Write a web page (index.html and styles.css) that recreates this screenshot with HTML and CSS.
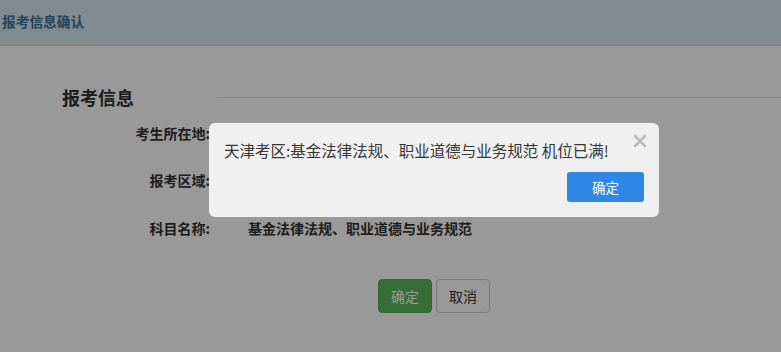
FILE: index.html
```html
<!DOCTYPE html>
<html lang="zh-CN">
<head>
<meta charset="utf-8">
<title>报考信息确认</title>
<link rel="stylesheet" href="styles.css">
</head>
<body>
<header class="topbar"><span class="topbar-title">报考信息确认</span></header>
<main class="content">
  <div class="section-head">
    <h2 class="section-title">报考信息</h2>
    <div class="section-rule"></div>
  </div>
  <div class="rows">
    <div class="row"><span class="row-label">考生所在地:</span><span class="row-value"></span></div>
    <div class="row"><span class="row-label">报考区域:</span><span class="row-value"></span></div>
    <div class="row"><span class="row-label">科目名称:</span><span class="row-value">基金法律法规、职业道德与业务规范</span></div>
  </div>
  <div class="actions">
    <button class="btn btn-success">确定</button>
    <button class="btn btn-default">取消</button>
  </div>
</main>
<div class="overlay"></div>
<div class="dialog">
  <svg class="dialog-close" width="12" height="12" viewBox="0 0 12 12"><path d="M1 1L11 11M11 1L1 11" stroke="#bababa" stroke-width="2.6" stroke-linecap="round"/></svg>
  <div class="dialog-msg">天津考区:基金法律法规、职业道德与业务规范 机位已满!</div>
  <div class="dialog-foot"><button class="btn-primary">确定</button></div>
</div>
</body>
</html>
```
FILE: styles.css
```css
html, body {
  margin: 0;
  padding: 0;
  height: 100%;
}
body {
  background: #ffffff;
  font-family: "Noto Sans CJK SC", "Liberation Sans", sans-serif;
  color: #333333;
  position: relative;
  overflow: hidden;
}
.topbar {
  height: 45px;
  border-bottom: 1px solid #c4d8e6;
  background: #d4e6f2;
  display: flex;
  align-items: center;
  padding-left: 2px;
}
.topbar-title {
  font-size: 13.7px;
  font-weight: bold;
  color: #3a729a;
  line-height: 20px;
  margin-top: -4px;
}
.content {
  padding-left: 62px;
}
.section-head {
  display: flex;
  align-items: center;
  margin-top: 39px;
  height: 24px;
}
.section-title {
  margin: 0;
  font-size: 18px;
  font-weight: bold;
  line-height: 24px;
  color: #333333;
}
.section-rule {
  flex: 1;
  height: 1px;
  background: #e3e3e3;
  margin-left: 83px;
}
.rows {
  display: flex;
  flex-direction: column;
}
.row {
  display: flex;
  height: 47.5px;
  align-items: center;
  font-size: 14px;
  font-weight: bold;
  color: #333333;
}
.row-label {
  width: 148px;
  text-align: right;
}
.row-value {
  margin-left: 38px;
}
.actions {
  margin-top: 27.5px;
  padding-left: 316px;
  display: flex;
  gap: 4px;
}
.btn {
  width: 54px;
  height: 34px;
  border-radius: 4px;
  font-family: inherit;
  font-size: 14px;
  padding: 0;
  cursor: pointer;
}
.btn-success {
  background: #5cb85c;
  border: 1px solid #4cae4c;
  color: #ffffff;
}
.btn-default {
  background: #ffffff;
  border: 1px solid #cccccc;
  color: #333333;
}
.overlay {
  position: absolute;
  inset: 0;
  background: rgba(0, 0, 0, 0.4);
}
.dialog {
  position: absolute;
  left: 209px;
  top: 123px;
  width: 450px;
  height: 94px;
  box-sizing: border-box;
  background: #f0f0f0;
  border-radius: 6px;
  padding: 16px 15px 15px;
  display: flex;
  flex-direction: column;
}
.dialog-close {
  position: absolute;
  top: 12px;
  right: 13px;
}
.dialog-msg {
  font-size: 15.5px;
  line-height: 22px;
  color: #363636;
}
.dialog-foot {
  margin-top: 11px;
  display: flex;
  justify-content: flex-end;
}
.btn-primary {
  width: 77px;
  height: 30px;
  border: none;
  border-radius: 3px;
  background: #2f88e6;
  color: #ffffff;
  font-family: inherit;
  font-size: 13.5px;
  padding: 0;
}
```
